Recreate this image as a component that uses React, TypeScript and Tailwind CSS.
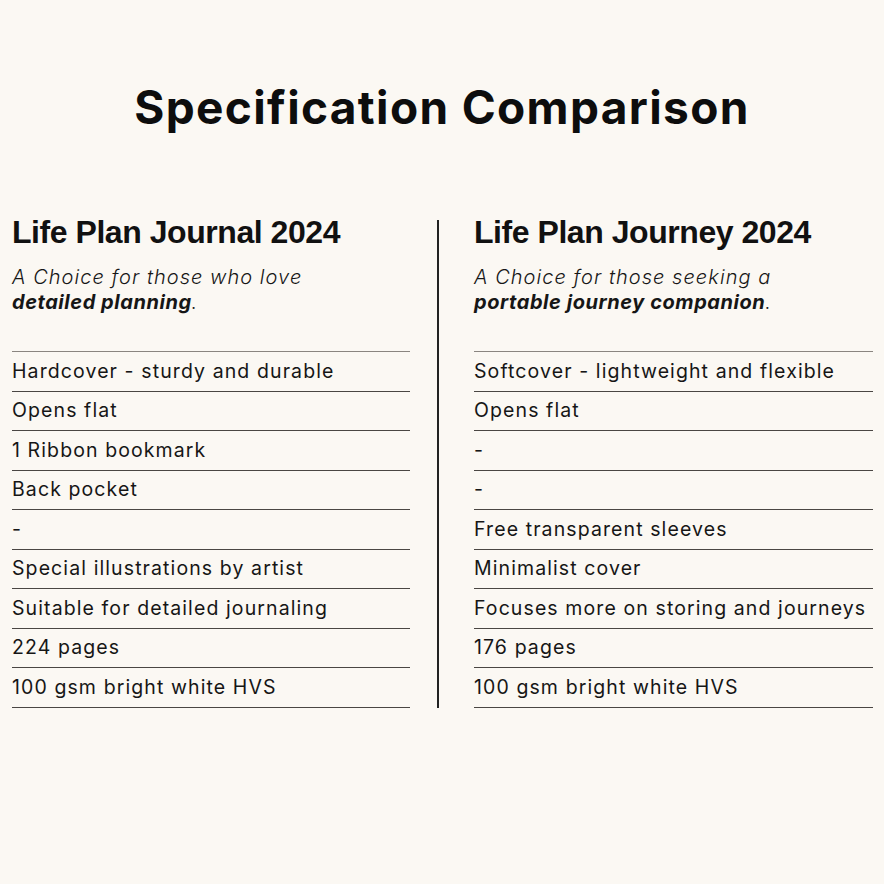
import React from "react";

const left = [
  "Hardcover - sturdy and durable",
  "Opens flat",
  "1 Ribbon bookmark",
  "Back pocket",
  "-",
  "Special illustrations by artist",
  "Suitable for detailed journaling",
  "224 pages",
  "100 gsm bright white HVS",
];

const right = [
  "Softcover - lightweight and flexible",
  "Opens flat",
  "-",
  "-",
  "Free transparent sleeves",
  "Minimalist cover",
  "Focuses more on storing and journeys",
  "176 pages",
  "100 gsm bright white HVS",
];

function Column({
  title,
  lead,
  strong,
  rows,
}: {
  title: string;
  lead: string;
  strong: string;
  rows: string[];
}) {
  return (
    <div className="flex flex-col">
      <h2 className="font-['Liberation_Sans',sans-serif] text-[32px] leading-[32px] font-bold tracking-[-0.45px] text-[#111]">
        {title}
      </h2>
      <p className="mt-[17px] font-['Inter',sans-serif] italic font-light text-[20px] leading-[25px] tracking-[1.05px] text-[#161616]">
        {lead}
        <br />
        <span className="font-bold tracking-[0.55px]">{strong}</span>.
      </p>
      <div className="mt-[36px] border-t border-[#8a8580]">
        {rows.map((r, i) => (
          <div
            key={i}
            className="h-[39.5px] flex items-center border-b border-[#4a4643] font-['Inter',sans-serif] font-normal text-[19.5px] tracking-[1.1px] text-[#161616]"
          >
            {r}
          </div>
        ))}
      </div>
    </div>
  );
}

export default function App() {
  return (
    <div className="w-[884px] h-[884px] bg-[#fbf8f3] pt-[80px]">
      <h1 className="text-center font-['Inter',sans-serif] font-bold text-[46px] leading-[54px] tracking-[1.35px] text-[#0d0d0d]">
        Specification Comparison
      </h1>
      <div className="mt-[82px] flex pl-[12px]">
        <div className="w-[398px]">
          <Column
            title="Life Plan Journal 2024"
            lead="A Choice for those who love"
            strong="detailed planning"
            rows={left}
          />
        </div>
        <div className="ml-[27px] mt-[4px] w-[2px] bg-[#222]" />
        <div className="ml-[35px] w-[399px]">
          <Column
            title="Life Plan Journey 2024"
            lead="A Choice for those seeking a"
            strong="portable journey companion"
            rows={right}
          />
        </div>
      </div>
    </div>
  );
}
